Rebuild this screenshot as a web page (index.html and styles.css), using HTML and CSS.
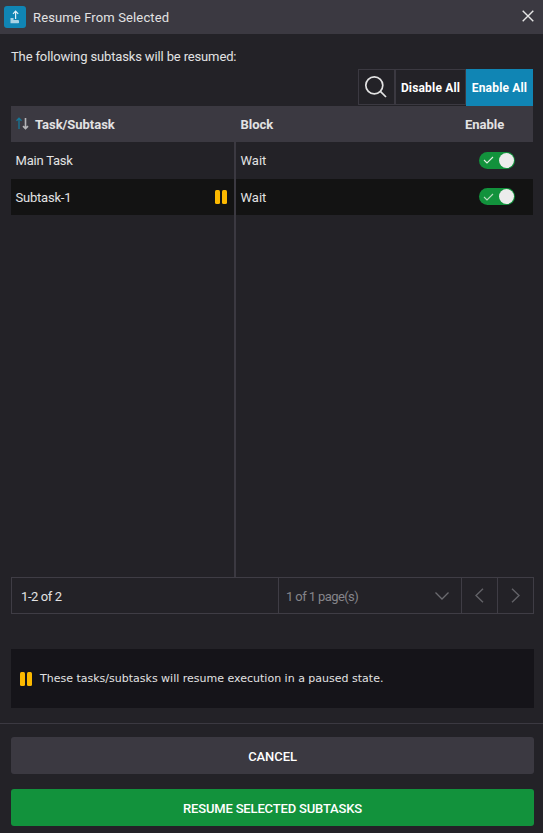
FILE: index.html
```html
<!DOCTYPE html>
<html lang="en">
<head>
<meta charset="utf-8">
<title>Resume From Selected</title>
<link rel="stylesheet" href="styles.css">
</head>
<body>
<div class="dialog">
  <header class="titlebar">
    <span class="app-icon">
      <svg width="22" height="22" viewBox="0 0 22 22" fill="none">
        <path d="M11.6 13V5.5M9 7.8l2.6-2.6 2.6 2.6" stroke="#e4f1f7" stroke-width="1.2"/>
        <path d="M6.5 12h3v2h5v3.2h-8z" fill="#a9d3e5"/>
        <path d="M9.5 14.5h5.5v2.5h-5.5z" fill="#a9d3e5"/>
      </svg>
    </span>
    <h1 class="title"><span class="t-title">Resume From Selected</span></h1>
    <svg class="close" width="12" height="12" viewBox="0 0 12 12"><path d="M.7.7l10.6 10.6M11.3.7L.7 11.3" stroke="#e6e6e6" stroke-width="1.4"/></svg>
  </header>
  <main class="content">
    <p class="intro"><span class="t-intro">The following subtasks will be resumed:</span></p>
    <div class="toolbar">
      <div class="tool search"><svg width="24" height="24" viewBox="0 0 24 24" fill="none" stroke="#e2e2e2" stroke-width="1.7"><circle cx="10.3" cy="10.3" r="8.5"/><path d="M16.4 16.4l5.6 5.6"/></svg></div>
      <div class="tool disable"><span class="t-disable">Disable All</span></div>
      <div class="tool enable"><span class="t-enable">Enable All</span></div>
    </div>
    <div class="table">
      <div class="row head">
        <div class="cell task">
          <svg class="sort" width="13" height="13" viewBox="0 0 13 13" fill="none"><path d="M3 12V1.2M.5 3.7L3 1.2l2.5 2.5" stroke="#167798" stroke-width="1.3"/><path d="M9.5 1v10.6M7 9.1l2.5 2.5L12 9.1" stroke="#b5b5b8" stroke-width="1.6"/></svg>
          <span class="t-task">Task/Subtask</span>
        </div>
        <div class="cell block"><span class="t-block">Block</span></div>
        <div class="cell toggle"><span class="t-en">Enable</span></div>
      </div>
      <div class="row">
        <div class="cell task"><span class="t-main">Main Task</span></div>
        <div class="cell block"><span class="t-wait">Wait</span></div>
        <div class="cell toggle"><span class="switch"><svg width="11" height="8" viewBox="0 0 11 8" fill="none" stroke="#e0f0e3" stroke-width="1.1"><path d="M1 4l3 3 6-6"/></svg><i class="knob"></i></span></div>
      </div>
      <div class="row alt">
        <div class="cell task"><span class="t-sub">Subtask-1</span><span class="pause"><i></i><i></i></span></div>
        <div class="cell block"><span class="t-wait">Wait</span></div>
        <div class="cell toggle"><span class="switch"><svg width="11" height="8" viewBox="0 0 11 8" fill="none" stroke="#b9dcc0" stroke-width="1.1"><path d="M1 4l3 3 6-6"/></svg><i class="knob"></i></span></div>
      </div>
      <div class="row filler"><div class="cell task"></div></div>
    </div>
    <div class="pager">
      <div class="range"><span class="t-range">1-2 of 2</span></div>
      <div class="page"><span class="t-page">1 of 1 page(s)</span><svg width="14" height="8" viewBox="0 0 14 8" fill="none" stroke="#6b6b70" stroke-width="1.3"><path d="M.5.5L7 7 13.5.5"/></svg></div>
      <div class="nav"><svg width="9" height="15" viewBox="0 0 9 15" fill="none" stroke="#626267" stroke-width="1.4"><path d="M8 .7L1 7.5l7 6.8"/></svg></div>
      <div class="nav"><svg width="9" height="15" viewBox="0 0 9 15" fill="none" stroke="#626267" stroke-width="1.4"><path d="M1 .7l7 6.8-7 6.8"/></svg></div>
    </div>
    <div class="notice"><span class="pause"><i></i><i></i></span><span class="t-notice">These tasks/subtasks will resume execution in a paused state.</span></div>
  </main>
  <footer class="actions">
    <div class="btn cancel"><span class="t-cancel">CANCEL</span></div>
    <div class="btn resume"><span class="t-resume">RESUME SELECTED SUBTASKS</span></div>
  </footer>
</div>
</body>
</html>
```
FILE: styles.css
```css
* { box-sizing: border-box; }
body { margin: 0; background: #232227; color: #e2e2e3; font: 13px/18px Roboto, "Liberation Sans", sans-serif; }
.dialog { width: 543px; height: 833px; overflow: hidden; }
span { white-space: nowrap; }
.titlebar { display: flex; align-items: center; height: 34px; padding: 0 9px 0 4px; background: #3b3941; }
.app-icon { display: flex; width: 22px; height: 22px; margin-top: -1px; border-radius: 3px; background: #1085b4; }
.title { flex: 1; margin: 1px 0 0 7px; font-size: 13px; font-weight: 400; letter-spacing: .13px; }
.close { margin-top: -2px; }
.content { padding: 0 9px 0 11px; }
.intro { height: 35px; margin: 0; padding-top: 14px; letter-spacing: -.14px; }
.toolbar { display: flex; justify-content: flex-end; height: 37px; padding-right: 1px; }
.tool { display: flex; align-items: center; justify-content: center; height: 36px; border: 1px solid #3b3941; color: #fff; font-weight: 700; font-size: 12px; letter-spacing: .17px; }
.search { width: 37px; padding-right: 2px; }
.disable { width: 71px; padding-top: 2px; }
.enable { width: 67px; height: 37px; border: 0; background: #1085b4; padding-top: 1px; }
.table { display: flex; flex-direction: column; width: 522px; height: 471px; }
.row { display: flex; height: 37px; }
.row.head { height: 36px; background: #3b3941; font-weight: 700; }
.row.alt { height: 36px; background: #131313; }
.row.filler { flex: 1; }
.cell { display: flex; align-items: center; }
.cell.task { width: 225px; padding: 0 7px 0 4px; border-right: 2px solid #3b3941; }
.cell.block { width: 229px; padding-left: 4.5px; }
.cell.toggle { flex: 1; }
.row:not(.head) .toggle { padding-left: 14px; }
.t-task, .t-block, .t-en { padding-top: 2px; }
.t-task { letter-spacing: -.03px; }
.t-main, .t-sub, .t-wait { padding-top: 1px; }
.t-main, .t-sub { margin-left: .5px; letter-spacing: -.22px; }
.sort { margin: -1px 6px 0 1px; }
.switch { display: flex; align-items: center; justify-content: space-between; width: 36px; height: 17px; margin-top: -1px; padding: 0 1.5px 0 4px; border-radius: 9px; background: #12923c; }
.knob { width: 15px; height: 15px; border-radius: 50%; background: #ececec; }
.pause { display: flex; gap: 2px; flex: none; }
.pause i { width: 5px; height: 14px; border-radius: 1.5px; background: #fcb900; }
.task .pause { margin-left: auto; margin-right: .5px; }
.pager { display: flex; width: 523px; height: 37px; border: 1px solid #3f3d45; }
.pager > div { display: flex; align-items: center; }
.range { width: 266px; padding-left: 9px; letter-spacing: -.4px; }
.t-range, .t-page { padding-top: 2px; }
.page { width: 183px; padding: 0 12px 0 7px; border-left: 1px solid #3f3d45; color: #85858a; justify-content: space-between; letter-spacing: -.6px; }
.nav { width: 36px; justify-content: center; border-left: 1px solid #3f3d45; }
.notice { display: flex; align-items: center; gap: 8px; width: 523px; height: 59px; margin-top: 35px; padding-left: 9px; background: #151419; font: 11px/16px "DejaVu Sans", sans-serif; }
.actions { display: flex; flex-direction: column; gap: 15px; margin-top: 15px; padding: 13.4px 9px 0 11px; border-top: 1px solid #3b3941; }
.btn { display: flex; align-items: center; justify-content: center; height: 37px; padding-top: 1.4px; border-radius: 3px; background: #3b3941; color: #fff; font-weight: 500; letter-spacing: -.08px; }
.btn.resume { background: #12923c; letter-spacing: -.17px; }
```
